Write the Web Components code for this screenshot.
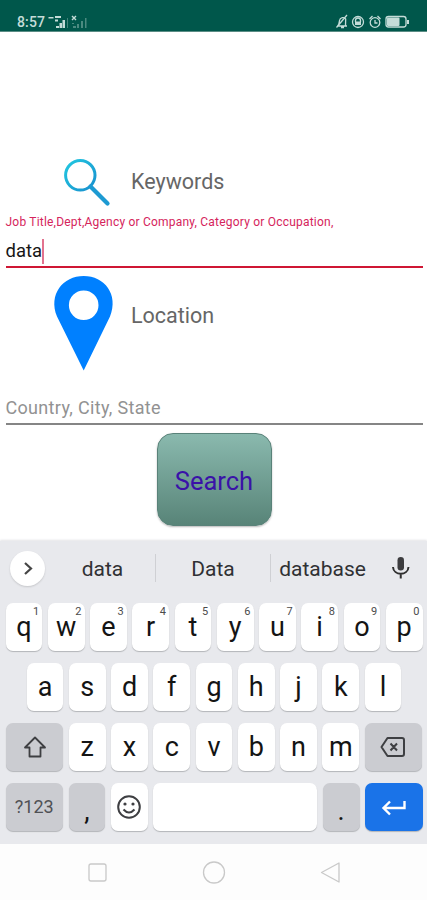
<!DOCTYPE html>
<html lang="en">
<head>
<meta charset="utf-8">
<title>Job search</title>
<style>
html,body{margin:0;height:900px;background:#fff;overflow:hidden}
body{font-family:Roboto,sans-serif}
</style>
</head>
<body>
<phone-screen></phone-screen>
<script>
const define = (name, render) => customElements.define(name, class extends HTMLElement {
  connectedCallback() {
    if (!this.shadowRoot) this.attachShadow({mode: 'open'}).innerHTML = render(this);
  }
});

define('status-bar', () => `
<style>
:host{display:flex;height:32px;box-sizing:border-box;padding:13px 17px 0 17px;background:#00574b;border-bottom:1px solid #5b8d85;color:#c4dcd8;justify-content:space-between}
.l,.r{display:flex;align-items:flex-start}
.t{font-size:14px;line-height:19px;font-weight:500;letter-spacing:.15px;width:30px;height:17px}
svg{display:block}
</style>
<div class="l"><span class="t">8:57</span>
<svg width="42" height="16" viewBox="0 0 42 16"><g fill="#c4dcd8"><path d="M1.500 4h5v1.500h-5zM8 3h6v2H8zM8 6.500h3v2H8zM9 13h3v2H9zM12.500 10h2.500v5h-2.500zM15.500 7H18v8h-2.500z"/><path d="M20 5h1v10h-1z" opacity=".35"/><path d="M25 3l4 4m0-4l-4 4" stroke="#c4dcd8" stroke-width="1.4"/><path d="M25 10h2v1h-2zM26 13h3v2h-3zM30 11h2v4h-2zM34 8h2v7h-2zM38 5h1.500v10H38z" opacity=".38"/></g></svg></div>
<div class="r"><svg width="75" height="18" viewBox="0 0 75 18" fill="none" stroke="#c4dcd8" stroke-width="1.300">
<path d="M2 13h10M3 12.500c1-1 1.200-3 1.500-5 .4-3 5-4 6.200-1.500l-.2 6.500M1.500 14.500L12 2M6 14.500h3"/>
<circle cx="23" cy="9" r="5.500"/><path d="M20.500 9v-1.500a2.500 2.500 0 0 1 5 0V9"/><path d="M20 8.500h6V12h-6z" fill="#c4dcd8" stroke="none"/>
<circle cx="40" cy="9.500" r="4.800"/><path d="M34.500 6l3-3M42.500 3l3 3M40 7v3h2.500"/>
<rect x="51" y="3.500" width="20" height="10.500" rx="2.500"/><rect x="52" y="4.500" width="12.500" height="8.500" rx="1" fill="#c4dcd8" stroke="none"/><path d="M73 7v4" stroke-width="2"/></svg></div>`);

define('field-heading', () => `
<style>
:host{display:flex;color:#666;font-size:21.500px;line-height:28px}
.i{width:131px;flex:none;display:block}
.t{padding-top:var(--label-top);letter-spacing:0}
::slotted(svg){display:block}
</style>
<div class="i"><slot name="icon"></slot></div><span class="t"><slot></slot></span>`);

define('text-field', el => `
<style>
:host{display:block;margin:0 4px 0 5.500px;box-sizing:border-box}
.h{display:block;font-size:12px;line-height:14px;color:#d5245c;letter-spacing:.21px;white-space:nowrap}
.v{display:flex;align-items:center;font-size:18.500px;line-height:26px;height:26px;color:#161616;margin-top:9px}
.c{width:2px;height:25px;background:#e2738f}
.p{font-size:18px;line-height:24px;color:#929292;display:block;letter-spacing:.32px}
.u{height:2px;background:#cf1734;margin-top:2px}
.u.g{height:1.500px;background:#858585;margin-top:3px}
</style>
${el.hasAttribute('hint') ? `<span class="h">${el.getAttribute('hint')}</span><div class="v"><span>${el.getAttribute('value')}</span><span class="c"></span></div><div class="u"></div>` : `<span class="p">${el.getAttribute('placeholder')}</span><div class="u g"></div>`}`);

define('search-button', () => `
<style>
:host{display:flex;align-items:center;justify-content:center;box-sizing:border-box;width:115px;height:93px;border:1px solid #598279;border-radius:16px;background:linear-gradient(#8ab9ae,#588478);color:#3a12a8;font-size:25.500px;letter-spacing:0;padding-top:3px;box-shadow:0 1px 2px rgba(0,0,0,.28)}
</style><slot></slot>`);

define('suggestion-bar', () => `
<style>
:host{display:grid;grid-template-columns:50px 105px 1px 114px 1px 103px 53px;align-items:center;height:54px;color:#303134;font-size:21px;letter-spacing:0;text-align:center}
span{padding-top:1px}
.m{width:35px;height:35px;margin-left:10px;border-radius:50%;background:#fff;box-shadow:0 1px 2px rgba(0,0,0,.15)}
.d{height:28px;width:1px;background:#cfd0d4;align-self:center}
svg{display:block}
.mic{margin-left:17px}
</style>
<div class="m"><svg width="35" height="35" viewBox="0 0 35 35"><path d="M15 12l6 5.500-6 5.500" fill="none" stroke="#454545" stroke-width="2.200"/></svg></div>
<span>data</span><i class="d"></i><span>Data</span><i class="d"></i><span>database</span>
<svg class="mic" width="20" height="26" viewBox="0 0 20 26"><rect x="6.500" y="2" width="6.500" height="13.500" rx="3.250" fill="#3c3c3f"/><path d="M2 12c.5 9 15 9 15.500 0M9.750 18.500v5" fill="none" stroke="#303030" stroke-width="2"/></svg>`);

define('key-cap', el => `
<style>
:host{position:relative;display:flex;align-items:center;justify-content:center;box-sizing:border-box;height:48px;border-radius:7px;background:#fff;color:#141414;font-size:27px;line-height:30px;box-shadow:0 1px 1px #b3b5b9;width:36.750px;flex:none}
:host([tone=grey]){background:#cbccd1}
:host([tone=blue]){background:#1a73e8}
:host([wide]){width:57.500px}
:host([space]){width:auto;flex:1}
:host([small]){font-size:18px;color:#505155;letter-spacing:0}
:host([low]){padding-top:8px}
sup{position:absolute;right:3px;top:3px;font-size:11px;line-height:12px;color:#4b4b4b}
::slotted(svg){display:block}
</style><slot></slot>${el.hasAttribute('n') ? `<sup>${el.getAttribute('n')}</sup>` : ''}`);

define('key-row', () => `
<style>:host{display:flex;justify-content:center;gap:5.500px;height:48px}</style><slot></slot>`);

define('soft-keyboard', () => {
  const keys = s => [...s].map(c => `<key-cap>${c}</key-cap>`).join('');
  return `
<style>
:host{display:flex;flex-direction:column;height:302.500px;box-sizing:border-box;background:#e8e9ed;box-shadow:0 -1px 2px #e3e3e6}
.k{display:flex;flex-direction:column;gap:12px;padding:8px 4.500px 0 5.500px}
svg{fill:none;stroke:#3e3f42;stroke-width:2}
</style>
<suggestion-bar></suggestion-bar>
<div class="k">
<key-row>${[...'qwertyuiop'].map((c, i) => `<key-cap n="${(i + 1) % 10}">${c}</key-cap>`).join('')}</key-row>
<key-row>${keys('asdfghjkl')}</key-row>
<key-row><key-cap tone="grey" wide><svg width="26" height="26" viewBox="0 0 26 26"><path d="M13 3.500L23 13.500h-4.500V22.500h-11v-9H3z" stroke-linejoin="round" stroke-width="1.800"/></svg></key-cap>${keys('zxcvbnm')}<key-cap tone="grey" wide><svg width="28" height="24" viewBox="0 0 28 24"><path d="M8.500 3h14.500q2 0 2 2v14q0 2-2 2H8.500L2.500 12zM11.500 8.500l6.500 7m0-7l-6.500 7" stroke-linejoin="round"/></svg></key-cap></key-row>
<key-row><key-cap tone="grey" wide small>?123</key-cap><key-cap tone="grey" low>,</key-cap><key-cap><svg width="26" height="26" viewBox="0 0 26 26"><circle cx="13" cy="13" r="10.800"/><path d="M7.500 15.500q5.500 6 11 0"/><g fill="#3e3f42" stroke="none"><circle cx="9" cy="10" r="1.600"/><circle cx="17" cy="10" r="1.600"/></g></svg></key-cap><key-cap space></key-cap><key-cap tone="grey" low>.</key-cap><key-cap tone="blue" wide><svg width="26" height="20" viewBox="0 0 26 20"><path d="M23.500 4v7H3M9 4.500L2.500 11 9 17.500" style="stroke:#fff;stroke-width:2.400"/></svg></key-cap></key-row>
</div>`;
});

define('nav-bar', () => `
<style>:host{display:block;height:56.500px;background:#fdfdfd;overflow:hidden}svg{display:block}</style>
<svg width="427" height="57" viewBox="0 0 427 57" fill="none" stroke="#c9c9c9" stroke-width="1.300"><rect x="89" y="20" width="17" height="17" rx="2"/><circle cx="214" cy="28.500" r="10.500"/><path d="M339 19v19L321.500 28.500z" stroke-linejoin="round"/></svg>`);

define('phone-screen', () => `
<style>
:host{display:flex;flex-direction:column;width:427px;height:900px;background:#fff}
main{display:flex;flex-direction:column;height:509px;padding-top:121px;box-sizing:border-box}
.a{--label-top:15px;height:62px}
.b{--label-top:34px;height:128px}
search-button{align-self:center;margin:8px 0 0 1px}
</style>
<status-bar></status-bar>
<main>
<field-heading class="a"><svg slot="icon" width="131" height="61" viewBox="0 0 131 61"><defs><linearGradient id="g" x1="0" y1="0" x2="1" y2="1"><stop stop-color="#22c8e0"/><stop offset="1" stop-color="#188fce"/></linearGradient></defs><circle cx="80.300" cy="22.300" r="14.700" fill="none" stroke="url(#g)" stroke-width="3"/><path d="M90.500 33.500L107.500 50.500" stroke="#1d9ad2" stroke-width="4.200" stroke-linecap="round"/></svg>Keywords</field-heading>
<text-field hint="Job Title,Dept,Agency or Company, Category or Occupation," value="data"></text-field>
<field-heading class="b"><svg slot="icon" width="131" height="128" viewBox="0 0 131 128"><path fill="#0080ff" fill-rule="evenodd" d="M83.700 102.500L57 48.500C48 26.500 63 8 83.700 8S119 26.500 110 48.500zM83.700 22.500a14.800 14.800 0 1 0 0 29.600a14.800 14.800 0 1 0 0-29.600"/></svg>Location</field-heading>
<text-field placeholder="Country, City, State"></text-field>
<search-button>Search</search-button>
</main>
<soft-keyboard></soft-keyboard>
<nav-bar></nav-bar>`);
</script>
</body>
</html>
